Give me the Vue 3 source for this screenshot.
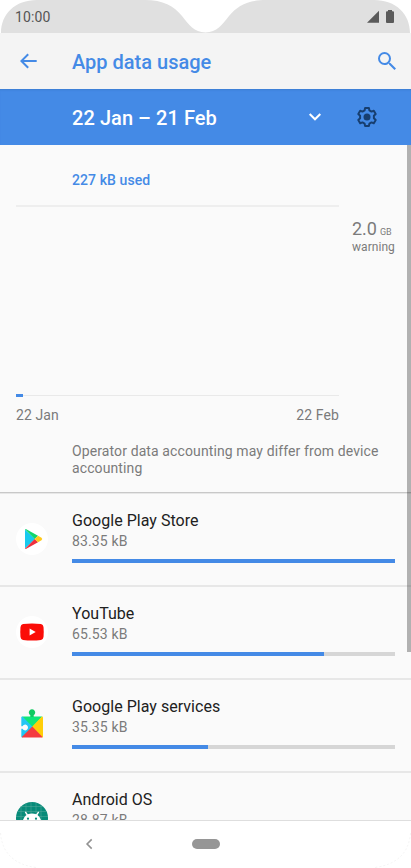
<script setup>
const apps = [
  { name: 'Google Play Store', used: '83.35 kB', share: 100, icon: 'play' },
  { name: 'YouTube', used: '65.53 kB', share: 78.1, icon: 'youtube' },
  { name: 'Google Play services', used: '35.35 kB', share: 42, icon: 'services' },
  { name: 'Android OS', used: '28.87 kB', share: 34, icon: 'android' },
]
</script>

<template>
  <div class="phone">
    <header class="status">
      <svg class="status-shape" viewBox="0 0 411 33" aria-hidden="true">
        <path d="M1 33C1 14 15 0 37 0H145C163 0 174 6 182 16C189 25 194 32 205.500 32.500C217 32 222 25 229 16C237 6 248 0 266 0H374C396 0 410 14 410 33Z" fill="#e0e0e0" />
      </svg>
      <span class="clock">10:00</span>
      <svg class="signals" width="28" height="14" viewBox="0 0 28 14" aria-hidden="true">
        <path d="M0 12.700 12 .800V12.700Z" fill="#5a5a5a" />
        <path d="M19 2.200Q19 1.300 20 1.300H21V0H25V1.300H26Q27 1.300 27 2.200V12Q27 13 26 13H20Q19 13 19 12Z" fill="#5a5a5a" />
      </svg>
    </header>

    <div class="toolbar">
      <svg class="back" width="24" height="24" viewBox="0 0 24 24" aria-hidden="true">
        <path d="M20.700 11H7.830l5.090-5.090L11.500 4.500l-7.500 7.500 7.500 7.500 1.420-1.410L7.830 13H20.700z" fill="#448ae6" />
      </svg>
      <h1>App data usage</h1>
      <svg class="search" width="24" height="24" viewBox="0 0 24 24" aria-hidden="true">
        <path d="M15.500 14h-.790l-.280-.270A6.470 6.470 0 0 0 16 9.500 6.500 6.500 0 1 0 9.500 16c1.610 0 3.090-.590 4.230-1.570l.270.280v.790l5.500 5.490L20.990 19.500zm-6 0a4.500 4.500 0 1 1 0-9 4.500 4.500 0 0 1 0 9z" fill="#448ae6" />
      </svg>
    </div>

    <div class="cycle">
      <span class="range">22 Jan – 21 Feb</span>
      <svg class="chevron" width="24" height="24" viewBox="0 0 24 24" fill="none" stroke="#fff" stroke-width="2" aria-hidden="true">
        <path d="M6.700 9 12 14.300 17.300 9" />
      </svg>
      <svg class="gear" width="24" height="24" viewBox="0 0 24 24" aria-hidden="true">
        <path d="M9.600 5.400 10.100 3H13.900L14.400 5.400 16.500 6.600 18.800 5.800 20.700 9.100 18.900 10.800V13.200L20.700 14.900 18.800 18.200 16.500 17.400 14.400 18.600 13.900 21H10.100L9.600 18.600 7.500 17.400 5.200 18.200 3.300 14.900 5.100 13.200V10.800L3.300 9.100 5.200 5.800 7.500 6.600Z" fill="none" stroke="#173e6f" stroke-width="2" stroke-linejoin="round" />
        <circle cx="12" cy="12" r="3.500" fill="#173e6f" />
      </svg>
    </div>

    <main class="content">
      <section class="summary">
        <div class="used">227 kB used</div>
        <div class="chart-row">
          <div class="chart"><span class="usage-mark"></span></div>
          <div class="warning">
            <div class="limit"><span>2.0</span><small>GB</small></div>
            <div class="caption">warning</div>
          </div>
        </div>
        <div class="dates"><span>22 Jan</span><span>22 Feb</span></div>
        <p>Operator data accounting may differ from device accounting</p>
      </section>

      <section v-for="app in apps" :key="app.name" class="app">
        <svg class="app-icon" width="32" height="32" viewBox="0 0 32 32" aria-hidden="true">
          <template v-if="app.icon === 'play'">
            <circle cx="16" cy="16" r="16" fill="#fff" />
            <path d="M9 6.500V25.500L19 16Z" fill="#18c9ee" />
            <path d="M9 6.300Q9.500 5.800 10.300 6.300L22 12.700 18.700 16Z" fill="#12d56d" />
            <path d="M9 25.700Q9.500 26.200 10.300 25.700L22 19.300 18.700 16Z" fill="#ee303e" />
            <path d="M22 12.700 25.500 14.800Q27 16 25.500 17.200L22 19.300 18.700 16Z" fill="#ffc91a" />
          </template>
          <template v-else-if="app.icon === 'youtube'">
            <circle cx="16" cy="16" r="16" fill="#fff" />
            <path d="M7 8Q16 7 25 8Q27.200 8.300 27.500 11Q28 16 27.500 21Q27.200 23.700 25 24Q16 25 7 24Q4.800 23.700 4.500 21Q4 16 4.500 11Q4.800 8.300 7 8Z" fill="#fb0d08" />
            <path d="M13.600 12.400V19.600L19.700 16Z" fill="#fff" />
          </template>
          <template v-else-if="app.icon === 'services'">
            <path d="M6 7.500H26.300L16.300 18.500Z" fill="#0fe678" />
            <path d="M14.300 8V6.200A3.200 3.200 0 1 1 17.700 6.200V8Z" fill="#10ca62" />
            <path d="M5.300 8.500Q5.300 7.500 6.300 7.500L16.800 18 6.300 28.500Q5.300 28.500 5.300 27.500Z" fill="#22c6f3" />
            <path d="M26 7.500Q27 7.500 27 8.500V27.500Q27 28.500 26 28.500L15.800 18Z" fill="#ffce08" />
            <path d="M16.300 17.500 26.500 28Q26.300 28.500 25.500 28.500H7Q6 28.500 5.800 28Z" fill="#f43b40" />
            <path d="M5 17.200H6.500A2.900 2.900 0 1 1 6.500 19.800H5Z" fill="#fafafa" />
          </template>
          <template v-else>
            <circle cx="16" cy="16" r="16" fill="#078b79" />
            <path d="M5 4.500H27M1 9.500H31M0 14.500H32M5 4V28M10 1V31M15 0V32M20 1V31M25 3V29" stroke="#58aa9e" stroke-width=".5" />
            <path d="M6.500 20.500Q7 15.500 10.500 13L8.800 10.200 9.900 9.500 11.800 12.300Q16 10.700 20.200 12.300L22.100 9.500 23.200 10.200 21.500 13Q25 15.500 25.500 20.500Z" fill="#fff" />
            <circle cx="12" cy="16.700" r="1.100" fill="#078b79" />
            <circle cx="20" cy="16.700" r="1.100" fill="#078b79" />
          </template>
        </svg>
        <div class="details">
          <div class="name">{{ app.name }}</div>
          <div class="amount">{{ app.used }}</div>
          <div class="track"><div class="fill" :style="{ width: app.share + '%' }"></div></div>
        </div>
      </section>
      <div class="scrollbar"></div>
    </main>

    <nav class="navigation">
      <svg class="nav-back" width="12" height="14" viewBox="0 0 12 14" fill="none" stroke="#929292" stroke-width="1.600" aria-hidden="true"><path d="M8.700 2.400 4.100 7 8.700 11.600" /></svg>
      <span class="home"></span>
      <svg class="corners" viewBox="0 0 411 48" fill="none" stroke="#ededed" stroke-width=".6" stroke-dasharray="2 2" aria-hidden="true"><path d="M.500 13Q3 43 36 47.500M410.500 13Q408 43 375 47.500" /></svg>
    </nav>
  </div>
</template>

<style>
body { margin: 0; background: #fff; }
</style>

<style scoped>
.phone { width: 411px; height: 868px; overflow: hidden; display: flex; flex-direction: column; font-family: Roboto, sans-serif; background: #fff; color: #212121; }
.status { position: relative; height: 33px; flex: none; display: flex; align-items: center; justify-content: space-between; box-sizing: border-box; padding: 0 16px 0 15px; }
.status-shape { position: absolute; inset: 0; width: 411px; height: 33px; }
.clock { position: relative; font-size: 14px; line-height: 16px; font-weight: 400; letter-spacing: .1px; color: #555; }
.signals { position: relative; }
.toolbar { height: 56px; flex: none; display: flex; align-items: center; background: #f4f4f4; }
.back { margin-left: 16px; }
h1 { margin: 0 0 0 32px; font-size: 20px; line-height: 24px; font-weight: 500; color: #448ae6; padding-top: 1px; }
.search { margin: 0 12px 0 auto; }
.cycle { height: 56px; flex: none; display: flex; align-items: center; box-sizing: border-box; padding: 0 32px 0 72px; background: #448ae6; box-shadow: inset 0 2px 2px -1px #3b7dd1; }
.range { font-size: 20px; line-height: 24px; font-weight: 500; letter-spacing: .06px; color: #fff; padding-top: 1px; }
.chevron { margin-left: auto; }
.gear { margin-left: 28px; }
.content { position: relative; height: 675px; flex: none; overflow: hidden; background: #fafafa; }
.summary { height: 349px; box-sizing: border-box; padding: 27px 16px 0; border-bottom: 1px solid #e7e7e7; box-shadow: inset 0 -1px #c8c8c8; }
.used { margin-left: 56px; font-size: 14px; line-height: 17px; font-weight: 500; letter-spacing: .08px; color: #448ae6; }
.chart-row { display: flex; margin-top: 16px; height: 192px; }
.chart { width: 323px; height: 191px; box-sizing: border-box; border-top: 2px solid #eeeeee; border-bottom: 1px solid #e9e9e9; display: flex; align-items: flex-end; }
.usage-mark { width: 7px; height: 3px; background: #448ae6; margin-bottom: -2px; }
.warning { margin: 15px 0 0 13px; color: #7b7b7b; white-space: nowrap; }
.limit { display: flex; align-items: flex-end; gap: 3px; font-size: 18px; line-height: 18px; }
.limit small { font-size: 9px; line-height: 11px; }
.caption { font-size: 12px; line-height: 14px; letter-spacing: .05px; margin-top: 2px; }
.dates { width: 323px; display: flex; justify-content: space-between; font-size: 14px; line-height: 17px; letter-spacing: .1px; color: #7b7b7b; margin-top: 10px; }
p { margin: 19px 0 0 56px; font-size: 14px; line-height: 17px; letter-spacing: .11px; color: #7b7b7b; }
.app { height: 93px; display: flex; box-sizing: border-box; border-bottom: 2px solid #e7e7e7; padding: 16px 16px 0; }
.app-icon { flex: none; margin-top: 12.600px; }
.details { flex: 1; margin-left: 24px; }
.name { font-size: 16px; line-height: 22px; letter-spacing: .03px; color: #212121; }
.amount { font-size: 14px; line-height: 18px; letter-spacing: .14px; color: #7b7b7b; }
.track { height: 4px; background: #d6d6d6; margin-top: 9px; }
.fill { height: 4px; background: #448ae6; }
.scrollbar { position: absolute; right: 0; top: 0; width: 4px; height: 507px; background: rgba(0,0,0,.29); }
.navigation { position: relative; height: 48px; flex: none; display: flex; align-items: center; box-sizing: border-box; border-top: 1px solid #dedede; padding-bottom: 1px; background: #fff; }
.nav-back { margin-left: 83px; }
.home { width: 28px; height: 10px; border-radius: 5px; background: #969696; margin-left: 97px; }
.corners { position: absolute; left: 0; top: -1px; width: 411px; height: 48px; }
</style>
